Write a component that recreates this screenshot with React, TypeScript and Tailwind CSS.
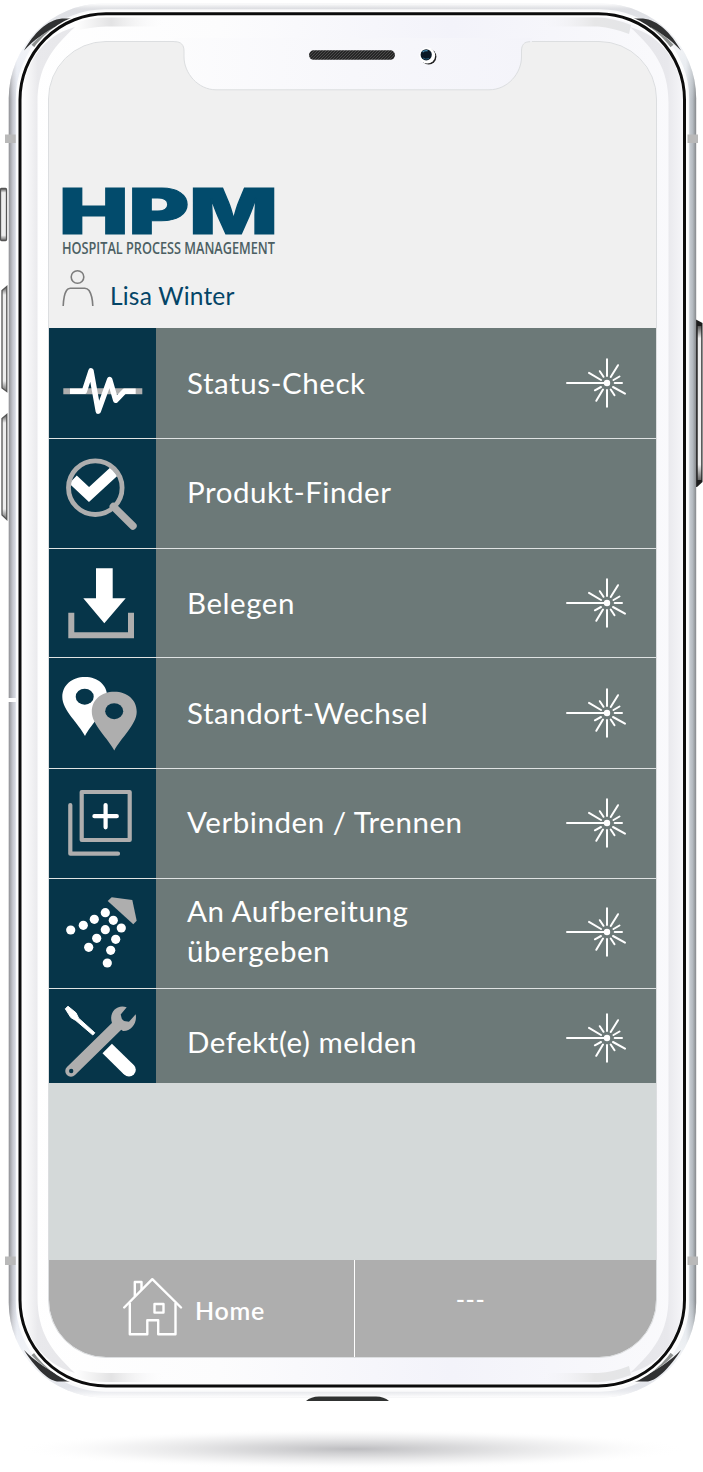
import React from 'react'

interface MenuEntry {
  bodyClass?: string
  height: string
  icon: React.ReactNode
  label: string
  labelClass?: string
  scannable: boolean
}

const PulseIcon = (): React.ReactNode => (
  <svg fill="none" height="110" viewBox="0 0 107 110" width="107">
    <path d="M14.3 63.3H93.3" stroke="#aeaeae" strokeWidth="6" />
    <path
      d="M21 63.3H35.3L42 42.8L49.3 83.2L60.7 51.5L66.7 72.3L75.3 63.3H86.7"
      stroke="#fff"
      strokeLinejoin="round"
      strokeWidth="5.4"
    />
  </svg>
)

const FinderIcon = (): React.ReactNode => (
  <svg fill="none" height="109" viewBox="0 0 107 109" width="107">
    <path d="M24 40.5L40 55.5L65 32.5" stroke="#fff" strokeWidth="11" />
    <circle cx="46.3" cy="48.7" r="26.8" stroke="#aeaeae" strokeWidth="4.8" />
    <path d="M64.3 67.5L84 87" stroke="#aeaeae" strokeLinecap="round" strokeWidth="7.4" />
  </svg>
)

const DownloadIcon = (): React.ReactNode => (
  <svg fill="none" height="109" viewBox="0 0 107 109" width="107">
    <path d="M22.3 63.7V86.3H82V63.7" stroke="#aeaeae" strokeWidth="6" />
    <path d="M47 19.3H63.7V49.3H76.7L55.3 74.3L34.3 49.3H47Z" fill="#fff" />
  </svg>
)

const PinsIcon = (): React.ReactNode => (
  <svg height="110" viewBox="0 0 107 110" width="107">
    <path d="M36 78C30 66 13.3 52 13.3 39C13.3 27 23 19 36 19S58.3 27 58.3 39C58.3 52 42 66 36 78Z" fill="#fff" />
    <ellipse cx="35.7" cy="38.7" fill="#063549" rx="9" ry="8" />
    <path
      d="M65.3 92.5C59.3 80.5 42.8 66.7 42.8 53.7C42.8 41.7 52.3 33.7 65.3 33.7S87.7 41.7 87.7 53.7C87.7 66.7 71.3 80.5 65.3 92.5Z"
      fill="#aeaeae"
    />
    <ellipse cx="65.2" cy="53.2" fill="#063549" rx="9" ry="8" />
  </svg>
)

const ConnectIcon = (): React.ReactNode => (
  <svg fill="none" height="109" strokeWidth="4.2" viewBox="0 0 107 109" width="107">
    <rect height="48" stroke="#aeaeae" strokeLinejoin="round" width="48" x="32.7" y="23" />
    <path d="M21.3 36V84.7H69" stroke="#aeaeae" strokeLinecap="round" strokeLinejoin="round" />
    <path d="M56.6 36V58.3M45.4 47.2H67.8" stroke="#fff" strokeLinecap="round" />
  </svg>
)

const sprayDrops = [
  [56.3, 33.7],
  [45.3, 40.3],
  [34.3, 46.3],
  [21.7, 51],
  [64.3, 41.3],
  [56.3, 50.7],
  [47.7, 59.3],
  [39.7, 68.3],
  [72.3, 49],
  [66.7, 60.3],
  [61.7, 71.3],
  [58.3, 84],
]

const SprayIcon = (): React.ReactNode => (
  <svg height="110" viewBox="0 0 107 110" width="107">
    <path d="M58.7 22L62.7 18.3L83.3 21L87.7 41.7L84.3 45.3Z" fill="#aeaeae" />
    {sprayDrops.map(([x, y]) => (
      <circle cx={x} cy={y} fill="#fff" key={`${x}-${y}`} r="4.6" />
    ))}
  </svg>
)

const ToolsIcon = (): React.ReactNode => (
  <svg fill="none" height="94" viewBox="0 0 107 94" width="107">
    <path
      d="M16.3 19.8L19 17.3L27 23.8L29.6 29.2L45.8 43.8L43.8 46L26.8 31.5L21.8 28.5Z"
      fill="#fff"
      stroke="#fff"
      strokeLinejoin="round"
    />
    <path d="M58.2 59.5L79.5 80.3" stroke="#fff" strokeWidth="13.5" />
    <circle cx="80" cy="80.7" fill="#fff" r="6.8" />
    <path d="M22 82L70 35" stroke="#aeaeae" strokeLinecap="round" strokeWidth="11.5" />
    <path
      d="M77.7 18.3C67.5 14.8 59.5 24 63 34L74 42C81.5 42.5 88.5 35 86.7 25.3L80 32.7L73.3 31.8L71.7 25.5Z"
      fill="#aeaeae"
    />
    <circle cx="22.2" cy="82" fill="#063549" r="2.2" />
  </svg>
)

const LaserIcon = (): React.ReactNode => (
  <svg className="shrink-0" fill="none" height="50" stroke="#fff" strokeLinecap="round" viewBox="0 0 61 50" width="61">
    <path
      d="M1 25H41M41 1.2V18M41 32V48.8M52 7.2L44.7 19M53.5 18.5L47.5 22M48.7 25H56M47 29L59 35.6M44.7 31.5L48.5 37.2M37 31.5L30.3 42.8M35 29L28.9 32.3M23 14.9L35 22M33.8 13.2L37.5 18.8"
      strokeWidth="2"
    />
    <circle cx="41" cy="25" fill="#fff" r="3.2" stroke="none" />
  </svg>
)

const UserIcon = (): React.ReactNode => (
  <svg fill="none" height="38" stroke="#7d7d7d" strokeWidth="1.6" viewBox="0 0 32 38" width="32">
    <circle cx="15.5" cy="8" r="6.3" />
    <path d="M1.2 37C1.5 30 2.6 24.5 4.5 21.5Q5.8 19.2 8.3 19.2H22.8Q25.3 19.2 27.1 21.5C29.3 25 30.6 30 30.8 37" />
  </svg>
)

const HomeIcon = (): React.ReactNode => (
  <svg fill="none" height="60" stroke="#fff" strokeLinejoin="round" strokeWidth="2.4" viewBox="0 0 60 60" width="60">
    <path d="M1.2 30.5L29.3 2.2L58 30.5" strokeLinecap="round" />
    <path d="M6.8 26V57.3H24.3V43.3H35.2V57.3H52.5V26M11.8 19.5V5H18.5V13" />
    <rect height="8.6" width="9" x="31.5" y="27" />
  </svg>
)

const Logo = (): React.ReactNode => (
  <svg className="block overflow-visible" height="70" viewBox="0 0 214 70" width="214">
    <text
      fill="#024b6c"
      fontFamily="Inter, 'Liberation Sans', sans-serif"
      fontSize="63.6"
      fontWeight="900"
      lengthAdjust="spacingAndGlyphs"
      stroke="#024b6c"
      textLength="219"
      x="-3"
      y="47"
    >
      HPM
    </text>
    <text
      fill="#4c5f63"
      fontFamily="'Open Sans', sans-serif"
      fontSize="17"
      fontWeight="600"
      lengthAdjust="spacingAndGlyphs"
      textLength="213"
      x="0"
      y="66.5"
    >
      HOSPITAL PROCESS MANAGEMENT
    </text>
  </svg>
)

// Casing, side keys and drop shadow of the handset, drawn behind the screen.
const PhoneBody = (): React.ReactNode => (
  <svg className="absolute inset-0" fill="none" height="1472" viewBox="0 0 703 1472" width="703">
    <defs>
      <linearGradient id="metal" x1="0" x2="1" y1="0" y2="0">
        <stop offset="0" stopColor="#8f9094" />
        <stop offset=".006" stopColor="#c6c8cf" />
        <stop offset=".012" stopColor="#e3e7f0" />
        <stop offset=".05" stopColor="#eceef2" />
        <stop offset=".5" stopColor="#dddee2" />
        <stop offset=".95" stopColor="#eceef2" />
        <stop offset=".985" stopColor="#dfe4ea" />
        <stop offset=".995" stopColor="#b3b9bf" />
        <stop offset="1" stopColor="#85888b" />
      </linearGradient>
      <linearGradient id="edge" x1="0" x2="0" y1="0" y2="1">
        <stop offset="0" stopColor="#fff" />
        <stop offset=".004" stopColor="#d9dade" stopOpacity=".7" />
        <stop offset=".008" stopColor="#d3d4d9" stopOpacity=".5" />
        <stop offset=".03" stopColor="#fff" stopOpacity=".5" />
        <stop offset=".07" stopColor="#fff" stopOpacity="0" />
        <stop offset=".93" stopColor="#fff" stopOpacity="0" />
        <stop offset=".97" stopColor="#fff" stopOpacity=".5" />
        <stop offset=".992" stopColor="#d9dbe2" stopOpacity=".5" />
        <stop offset="1" stopColor="#fff" />
      </linearGradient>
      <linearGradient id="bezel" x1="0" x2="1" y1="0" y2="0">
        <stop offset="0" stopColor="#fff" />
        <stop offset=".3" stopColor="#fcfcfd" />
        <stop offset=".65" stopColor="#f3f3fa" />
        <stop offset="1" stopColor="#fafafc" />
      </linearGradient>
      <linearGradient id="bandLeft" x1="0" x2="1" y1="0" y2="0">
        <stop offset="0" stopColor="#fff" />
        <stop offset=".3" stopColor="#e9e9ec" />
        <stop offset="1" stopColor="#e7e7ea" />
      </linearGradient>
      <linearGradient id="bandRight" x1="0" x2="1" y1="0" y2="0">
        <stop offset="0" stopColor="#e5e5e9" />
        <stop offset=".7" stopColor="#e8e8ec" />
        <stop offset="1" stopColor="#f6f6f9" />
      </linearGradient>
      <linearGradient id="shineLeft" x1="0" x2="1" y1="0" y2="0">
        <stop offset="0" stopColor="#fff" />
        <stop offset=".4" stopColor="#e3e3e4" />
        <stop offset="1" stopColor="#fcfcfd" stopOpacity="0" />
      </linearGradient>
      <linearGradient id="shineRight" x1="1" x2="0" y1="0" y2="0">
        <stop offset="0" stopColor="#e4e5e7" />
        <stop offset=".4" stopColor="#e6e6e7" />
        <stop offset="1" stopColor="#f6f6fa" stopOpacity="0" />
      </linearGradient>
      <linearGradient id="key" x1="0" x2="0" y1="0" y2="1">
        <stop offset="0" stopColor="#555" />
        <stop offset=".08" stopColor="#eee" />
        <stop offset=".9" stopColor="#eee" />
        <stop offset="1" stopColor="#666" />
      </linearGradient>
      <radialGradient id="shadow">
        <stop offset="0" stopColor="#bdbdc0" />
        <stop offset=".35" stopColor="#d2d2d4" stopOpacity=".8" />
        <stop offset=".7" stopColor="#ededee" stopOpacity=".6" />
        <stop offset="1" stopColor="#fff" stopOpacity="0" />
      </radialGradient>
    </defs>

    <ellipse cx="352" cy="1449" fill="url(#shadow)" rx="335" ry="20" />

    <g fill="url(#key)" stroke="#555" strokeWidth="1.3">
      <rect height="52" rx="1" width="6" x=".5" y="188.5" />
      <path d="M6.8 286.5L2 290.5V388L6.8 391.5Z" />
      <path d="M6.8 414.5L2 418.5V515L6.8 519.5Z" />
    </g>
    <path d="M695 319L702.5 323V482L697 487H695Z" fill="#1d1d1d" />
    <rect fill="url(#key)" height="154" width="3.6" x="697.7" y="326" />

    <rect fill="url(#metal)" height="1394" rx="95" width="687.5" x="8.7" y="3.5" />
    <rect fill="url(#edge)" height="1394" rx="95" width="687.5" x="8.7" y="3.5" />
    <rect height="1380" rx="88" stroke="#fff" strokeOpacity=".8" strokeWidth="2.4" width="671" x="17" y="10.5" />

    <g fill="#303132">
      <path d="M24 50.5C34 33 47 20 62 18.5H72L57 27C44 33 35 39 24 50.5Z" />
      <path d="M681 50.5C671 33 658 20 643 18.5H633L648 27C661 33 670 39 681 50.5Z" />
      <path d="M24 1350C34 1366 47 1380 57 1381.5H72L57 1374C44 1367 35 1361 24 1350Z" />
      <path d="M681 1350C671 1366 658 1380 648 1381.5H633L648 1374C661 1367 670 1361 681 1350Z" />
    </g>
    <g stroke="#8f9291" strokeWidth="4">
      <path d="M33 46Q42 36 55 29" />
      <path d="M672 46Q663 36 650 29" />
      <path d="M33 1354Q42 1364 55 1371" />
      <path d="M672 1354Q663 1364 650 1371" />
    </g>

    <rect fill="url(#bezel)" height="1373" rx="86" stroke="#fff" strokeWidth="6" width="664.5" x="20" y="13.7" />
    <path
      d="M22 104C22 65 42 36 75 27C51 49 37.5 68 37.5 103V1297C37.5 1332 51 1351 75 1373C42 1364 22 1335 22 1296Z"
      fill="url(#bandLeft)"
    />
    <path
      d="M683 104C683 65 663 36 630 27C654 49 668.5 68 668.5 103V1297C668.5 1332 654 1351 630 1373C663 1364 683 1335 683 1296Z"
      fill="url(#bandRight)"
    />
    <path d="M75 31L78 22Q92 17.5 106 17.5H166V26.5H106Q90 27 75 31Z" fill="url(#shineLeft)" />
    <path d="M629 34L631 25Q612 17.5 598 17.5H540V26.5H598Q614 28 629 34Z" fill="url(#shineRight)" />
    <path d="M75 1369L78 1378Q92 1382 106 1382H166V1373H106Q90 1373 75 1369Z" fill="url(#shineLeft)" />
    <path d="M629 1366L631 1375Q612 1382 598 1382H540V1373H598Q614 1372 629 1366Z" fill="url(#shineRight)" />
    <rect height="1372.2" rx="86" stroke="#0c0c0c" strokeWidth="3" width="664.5" x="20" y="13.7" />

    <g fill="#b9b9b9">
      <path d="M5 134.5H15.7V143H5ZM5 1256.5H15.7V1265H5Z" />
      <path d="M687.5 134.5H698V143H687.5ZM687.5 1256.5H698V1265H687.5Z" />
    </g>
    <path d="M8 700H16" stroke="#fff" strokeWidth="4" />
    <path d="M306 1401Q311 1396.5 319 1396.5H376Q384 1396.5 389 1401Z" fill="#303231" />
  </svg>
)

const Notch = (): React.ReactNode => (
  <svg className="absolute left-[174px] top-[38px]" fill="none" height="54" viewBox="0 0 358 54" width="358">
    <defs>
      <linearGradient id="notch" x1="0" x2="1" y1="0" y2="0">
        <stop offset="0" stopColor="#fcfcfd" />
        <stop offset=".5" stopColor="#f7f7fb" />
        <stop offset="1" stopColor="#f4f4fa" />
      </linearGradient>
      <pattern height="3" id="mesh" patternUnits="userSpaceOnUse" width="3">
        <rect fill="#262626" height="3" width="3" />
        <path d="M0 3L3 0" stroke="#555" strokeWidth=".8" />
      </pattern>
    </defs>
    <path
      d="M0 3.7H1C7 3.7 10 7 10 13V19C10 35 24 51.8 42 51.8H315C334 51.8 347.5 35 347.5 19V13C347.5 7 350 3.7 356 3.7H358V0H0Z"
      fill="url(#notch)"
    />
    <path
      d="M0 3.7H1C7 3.7 10 7 10 13V19C10 35 24 51.8 42 51.8H315C334 51.8 347.5 35 347.5 19V13C347.5 7 350 3.7 356 3.7"
      stroke="#dcdee0"
    />
    <rect fill="url(#mesh)" height="9.5" rx="4.7" width="86" x="135" y="12.3" />
    <circle cx="254.7" cy="18.7" fill="#222" r="7.7" />
    <circle cx="253.2" cy="17.6" fill="#fff" r="8" />
    <circle cx="252.2" cy="16.8" fill="#0a1826" r="5.6" />
    <path d="M248.6 14.2Q250 12.3 253.5 12.7" stroke="#4389ad" strokeWidth="1.4" />
    <path d="M249 20Q251.5 22 255 20.5" stroke="#245a7a" />
  </svg>
)

const entries: MenuEntry[] = [
  { height: 'h-[111px]', icon: <PulseIcon />, label: 'Status-Check', scannable: true },
  {
    bodyClass: 'pb-1',
    height: 'h-[110px]',
    icon: <FinderIcon />,
    label: 'Produkt-Finder',
    scannable: false,
  },
  { bodyClass: 'pb-px', height: 'h-[109px]', icon: <DownloadIcon />, label: 'Belegen', scannable: true },
  { bodyClass: 'pb-px', height: 'h-[111px]', icon: <PinsIcon />, label: 'Standort-Wechsel', scannable: true },
  {
    bodyClass: 'pb-0.5',
    height: 'h-[110px]',
    icon: <ConnectIcon />,
    label: 'Verbinden / Trennen',
    labelClass: 'pb-0.5',
    scannable: true,
  },
  {
    bodyClass: 'pb-[3px]',
    height: 'h-[110px]',
    icon: <SprayIcon />,
    label: 'An Aufbereitung übergeben',
    labelClass: 'pb-0.5',
    scannable: true,
  },
  {
    bodyClass: 'pt-1',
    height: 'h-[94px]',
    icon: <ToolsIcon />,
    label: 'Defekt(e) melden',
    labelClass: 'pt-2',
    scannable: true,
  },
]

const MenuRow = ({
  bodyClass = '',
  height,
  icon,
  label,
  labelClass = '',
  scannable,
}: MenuEntry): React.ReactNode => (
  <li className={`flex border-b border-[#dfe3e3] last:border-b-0 ${height}`}>
    <div className="w-[107px] shrink-0 overflow-hidden bg-[#063549]">{icon}</div>
    <button
      className={`flex flex-1 items-center justify-between bg-[#6c7978] pl-[31px] pr-[29px] text-left text-white ${bodyClass}`}
    >
      <span className={`max-w-[300px] text-[29.5px] leading-10 tracking-[0.55px] ${labelClass}`}>{label}</span>
      {scannable && <LaserIcon />}
    </button>
  </li>
)

const App = (): React.ReactNode => (
  <div className="relative h-[1472px] w-[703px] overflow-hidden bg-white font-[Lato,'Open_Sans',sans-serif]">
    <PhoneBody />
    <div className="relative pl-[49px] pt-[42px]">
      <main className="flex h-[1315px] w-[607px] flex-col overflow-hidden rounded-[57px] bg-[#f0f0f0] outline outline-[#dcdee0]">
        <header className="h-[286px] shrink-0 pl-[13px] pt-[145px]">
          <Logo />
          <div className="mt-[9px] flex items-center gap-4">
            <UserIcon />
            <span className="pt-4 text-[24.5px] leading-7 tracking-[0.2px] text-[#044567]">Lisa Winter</span>
          </div>
        </header>
        <ul className="shrink-0">
          {entries.map((entry) => (
            <MenuRow key={entry.label} {...entry} />
          ))}
        </ul>
        <div className="flex-1 bg-[#d4d9d9]" />
        <footer className="flex h-[97px] shrink-0 bg-[#aeaeae] text-[25px] text-white">
          <button className="flex w-[306px] items-center gap-3 border-r border-white pb-[3px] pl-[74px]">
            <HomeIcon />
            <span className="pt-2 font-semibold tracking-[0.7px]">Home</span>
          </button>
          <button className="flex-1 pb-[18px] pr-[70px] font-medium tracking-[0.5px]">---</button>
        </footer>
      </main>
    </div>
    <Notch />
  </div>
)

export default App
